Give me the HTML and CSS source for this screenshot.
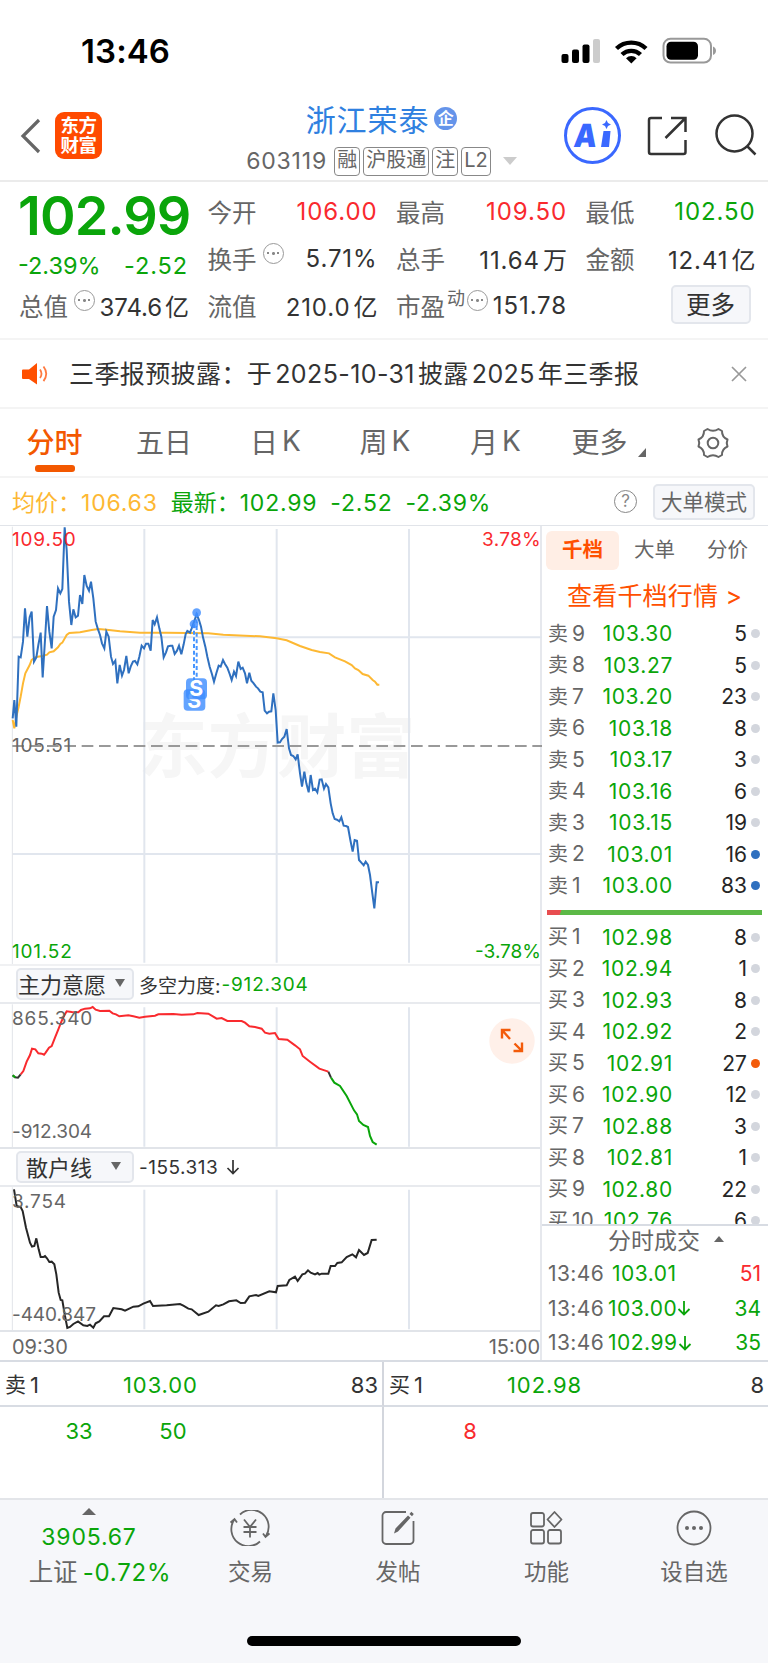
FILE: index.html
```html
<!DOCTYPE html>
<html lang="zh-CN">
<head>
<meta charset="utf-8">
<title>浙江荣泰 603119</title>
<link rel="stylesheet" href="styles.css">
</head>
<body>
<div class="phone">
  <div class="status">
    <span class="clock">13:46</span>
    <svg class="status-icons" width="160" height="30" viewBox="560 36 160 30">
      <rect x="561.500" y="54" width="7" height="9" rx="2"/><rect x="572" y="49.500" width="7" height="13.500" rx="2"/><rect x="582.500" y="44.500" width="7" height="18.500" rx="2"/><rect x="593" y="39" width="7" height="24" rx="2" fill="#ccc"/>
      <g fill="none" stroke="#000" stroke-width="4.400"><path d="M616.500 48.500a21.500 21.500 0 0 1 29.500 0"/><path d="M622 54.500a13.500 13.500 0 0 1 18.500 0"/></g>
      <path d="M631.300 63.500l-5.300-5.300a7.500 7.500 0 0 1 10.600 0z"/>
      <rect x="663.500" y="38.800" width="47.500" height="23.700" rx="7" fill="none" stroke="#999" stroke-width="2"/><rect x="666.500" y="41.800" width="31.500" height="18" rx="4.500"/><path d="M713 46.500c4 1.500 4 7 0 8.500z" fill="#999"/>
    </svg>
  </div>

  <header class="header">
    <svg class="back" width="24" height="38" viewBox="0 0 24 38"><path d="M20 3L4 19l16 16" fill="none" stroke="#666" stroke-width="3.200"/></svg>
    <div class="logo"><span>东方</span><span>财富</span></div>
    <div class="title">
      <div class="name">浙江荣泰<i class="corp">企</i></div>
      <div class="code"><span class="num">603119</span><b>融</b><b>沪股通</b><b>注</b><b>L2</b><svg width="14" height="8"><path d="M0 0h14l-7 8z" fill="#ccc"/></svg></div>
    </div>
    <div class="ai"><span>A</span><svg width="12" height="28" viewBox="0 0 12 28"><path d="M3.500 11h7L9 27H1z" fill="#3a68ff"/><path d="M6.500 0l1.500 3 3 1.500-3 1.500-1.500 3L5 6 2 4.500 5 3z" fill="#3a68ff"/></svg></div>
    <svg class="share" width="40" height="40" viewBox="0 0 40 40" fill="none" stroke="#333" stroke-width="2.500"><path d="M15 2H4a2 2 0 0 0-2 2v32a2 2 0 0 0 2 2h32.500a2 2 0 0 0 2-2V24M24 2h14.500v14M38 2.500L18.500 22"/></svg>
    <svg class="search" width="42" height="42" viewBox="0 0 42 42" fill="none" stroke="#333" stroke-width="2.500"><circle cx="19.500" cy="19.500" r="18"/><path d="M32 32l8.500 8.500"/></svg>
  </header>

  <section class="quote">
    <div class="price-block"><strong class="last">102.99</strong><div class="change"><span>-2.39%</span><span class="delta">-2.52</span></div></div>
    <div class="pair"><label>今开</label><span class="red">106.00</span></div>
    <div class="pair"><label>最高</label><span class="red">109.50</span></div>
    <div class="pair"><label>最低</label><span class="green">102.50</span></div>
    <div class="pair"><label>换手</label><i class="more-dot"></i><span>5.71%</span></div>
    <div class="pair"><label>总手</label><span>11.64<em>万</em></span></div>
    <div class="pair"><label>金额</label><span>12.41<em>亿</em></span></div>
    <div class="pair tight"><label>总值</label><i class="more-dot"></i><span>374.6<em>亿</em></span></div>
    <div class="pair"><label>流值</label><span>210.0<em>亿</em></span></div>
    <div class="pair"><label>市盈</label><sup>动</sup><i class="more-dot"></i><span>151.78</span></div>
    <button class="btn more-btn">更多</button>
  </section>

  <section class="notice">
    <svg width="28" height="24" viewBox="0 0 28 24"><path d="M1 7.500h6L15 1v21.500L7 17H1a1 1 0 0 1-1-1V8.500a1 1 0 0 1 1-1z" fill="#ff5000"/><path d="M18 7.500q3 4.300 0 8.600M21.500 4.500q5.500 7.300 0 14.600" fill="none" stroke="#ff7a40" stroke-width="1.800"/></svg>
    <p>三季报预披露：于<span>2025-10-31</span>披露<span>2025</span>年三季报</p>
    <svg class="close" width="16" height="16" viewBox="0 0 16 16"><path d="M1 1l14 14M15 1L1 15" stroke="#999" stroke-width="1.700"/></svg>
  </section>

  <nav class="tabs">
    <a class="on">分时</a><a>五日</a><a>日<span>K</span></a><a>周<span>K</span></a><a>月<span>K</span></a>
    <a class="tab-more">更多<svg width="8" height="9"><path d="M8 0v9H0z" fill="#666"/></svg></a>
    <svg class="gear" width="34" height="34" viewBox="-17 -17 34 34" fill="none" stroke="#666" stroke-width="2"><path d="M-5.500-14Q0-10.500 5.500-14L9-12Q8.800-6 14.500-3.500Q13 0 14.500 3.500Q8.800 6 9 12L5.500 14Q0 10.500-5.500 14L-9 12Q-8.800 6-14.500 3.500Q-13 0-14.500-3.500Q-8.800-6-9-12Z" stroke-linejoin="round"/><circle r="5.300"/></svg>
  </nav>

  <section class="summary">
    <span class="avg">均价：<b>106.63</b></span><span class="new">最新：<b>102.99</b><b>-2.52</b><b>-2.39%</b></span>
    <i class="help">?</i><button class="btn mode">大单模式</button>
  </section>

  <main class="main">
    <div class="left">
      <div class="chart price-chart">
        <svg width="542" height="439" viewBox="0 18 1626 1317" fill="none" stroke-width="6">
          <text x="415" y="757" class="wm">东方财富</text>
          <path d="M37 352H1626M37 1002H1626M433 27V1328M830 27V1328M1227 27V1328" stroke="#e1e6ee" stroke-width="6"/>
          <path d="M37 20V1332" stroke="#e1e4e9" stroke-width="3"/>
          <path d="M37 678H1626" stroke="#999" stroke-width="6" stroke-dasharray="35 17"/>
          <path stroke="#fdb833" d="M38 600L43 625 49 590 56 560 62 530 69 490 76 460 89 435 95 420 108 411 128 408 141 404 148 397 161 394 174 382 181 372 187 368 200 345 208 339 240 337 275 330 295 327 320 329 360 334 420 338 500 338 625 340 670 344 780 349 830 355 860 361 900 378 935 390 960 396 987 400 1005 412 1035 424 1055 435 1065 445 1075 450 1088 462 1105 467 1118 480 1125 485 1132 494H1138"/>
          <path stroke="#2f70bf" d="M38 595L43 540 49 620 56 410 62 412 69 365 75 265 82 350 89 292 95 275 102 425 109 412 115 375 122 338 128 472 135 360 141 258 148 335 155 385 161 290 168 270 174 205 181 220 187 207 194 22 200 90 207 245 214 315 220 268 227 292 234 287 240 225 247 252 253 165 260 198 267 212 273 185 280 235 287 305 293 325 300 345 306 370 313 385 319 335 326 350 333 410 339 432 346 422 352 490 359 435 366 467 372 450 379 408 386 460 392 440 399 425 405 423 412 433 418 410 425 377 432 385 438 371 445 371 452 392 458 300 464 313 471 292 478 325 484 350 491 412 498 397 504 379 511 377 517 377 524 402 531 392 537 377 544 403 551 373 557 342 562 333 570 338 575 325 590 283 597 300 603 320 609 352 616 380 622 410 629 440 636 463 642 485 649 460 656 437 662 440 669 420 675 432 682 443 689 462 695 480 702 455 708 468 715 425 722 447 728 443 735 460 741 490 748 458 754 482 761 490 768 500 774 505 781 515 788 517 794 572 801 580 807 575 814 574 820 520 827 570 833 668 840 667 846 657 853 650 860 627 867 685 873 705 880 708 887 718 893 703 900 760 906 800 913 755 919 790 926 817 932 765 939 810 945 806 952 817 959 779 965 778 972 806 978 792 985 802 992 850 998 880 1004 897 1011 899 1018 904 1024 892 1031 917 1038 918 1044 921 1051 960 1058 995 1064 960 1071 962 1077 1020 1084 1028 1091 1036 1097 1025 1104 1035 1110 1065 1117 1120 1123 1165 1130 1087H1137"/>
          <path d="M582 312V508M590 278V475" stroke="#4795ff" stroke-dasharray="12 8"/>
          <g fill="#3c8cff" fill-opacity=".8"><circle cx="590" cy="278" r="13"/><circle cx="582" cy="312" r="13"/><rect x="551" y="508" width="65" height="64" rx="12"/><text x="583" y="563" class="mark">S</text><rect x="558" y="475" width="63" height="63" rx="12"/><text x="589" y="529" class="mark">S</text></g>
        </svg>
        <span class="lbl tl wide red">109.50</span><span class="lbl tr red">3.78%</span><span class="lbl mid wide">105.51</span><span class="lbl bl wide green">101.52</span><span class="lbl br green">-3.78%</span>
      </div>
      <div class="bar"><button class="btn pick">主力意愿<i></i></button><span>多空力度:<b>-912.304</b></span></div>
      <div class="chart sub-chart">
        <svg width="542" height="145" viewBox="0 129 1626 435" fill="none" stroke-width="6">
          <path d="M433 139V557M830 139V557M1227 139V557" stroke="#e1e6ee"/><path d="M37 130V562" stroke="#e1e4e9" stroke-width="3"/>
          <path stroke="#333" d="M38 343L45 349 54 350 62 340M985 332L993 350"/>
          <path stroke="#0aa50a" d="M38 343L46 349M993 350L1003 365 1020 375 1040 405 1062 448 1071 460 1077 480 1090 492 1104 498 1110 525 1118 543 1130 551"/>
          <path stroke="#f92a2e" d="M62 340L70 330 80 302 90 282 96 263 106 265 115 277 125 278 132 281 137 275 147 260 155 255 165 230 175 205 185 180 192 165 200 151 215 153 235 154 243 147 255 143 270 142 278 138 287 146 300 150 328 149 338 157 348 160 358 166 385 163 400 166 418 170 435 167 465 164 475 160 520 159 545 161 580 160 592 156 625 158 640 167 650 173 665 171 682 180 725 180 735 185 748 196 765 198 785 203 795 215 808 218 825 216 836 234 862 236 885 253 900 265 908 285 930 302 958 323 985 332"/>
        </svg>
        <span class="lbl tl wide">865.340</span><span class="lbl bl">-912.304</span>
        <svg class="expand" width="46" height="46" viewBox="-23 -23 46 46"><circle r="22.700" fill="#fff0e9"/><path d="M-1.500-11H-10v8.500M-10-11L-2-2M1.500 10H10V1.500M10 10L2.500 2.500" fill="none" stroke="#f35b0a" stroke-width="2.400"/></svg>
      </div>
      <div class="bar"><button class="btn pick second">散户线<i></i></button><span class="retail">-155.313 <svg width="14" height="16" viewBox="0 0 14 16"><path d="M7 1v13M1.500 9L7 14.500 12.500 9" fill="none" stroke="#333" stroke-width="1.700"/></svg></span></div>
      <div class="chart sub-chart">
        <svg width="542" height="145" viewBox="0 108 1626 435" fill="none" stroke-width="6">
          <path d="M433 116V535M830 116V535M1227 116V535" stroke="#e1e6ee"/><path d="M37 109V541" stroke="#e1e4e9" stroke-width="3"/>
          <path stroke="#262626" d="M42 115L50 165 62 168 68 180 78 230 90 275 96 287 103 285 109 262 116 295 122 318 130 318 135 315 141 322 148 333 155 332 163 340 169 370 176 425 182 447 187 448 195 495 202 531 210 528 220 519 234 511 250 523 262 525 270 521 280 530 287 517 298 511 312 496 327 496 340 471 365 475 375 479 400 467 415 466 430 458 450 450 459 465 500 463 540 459 550 464 565 473 575 475 596 492 625 482 648 463 656 465 670 460 687 451 709 448 722 456 735 455 748 436 768 432 775 435 808 421 828 424 833 405 860 403 868 387 885 377 893 390 907 370 915 368 924 358 932 365 945 370 953 366 958 371 965 368 985 368 992 345 1005 345 1012 336 1025 334 1040 318 1057 310 1068 319 1077 297 1092 312 1103 306 1115 267 1130 266"/>
        </svg>
        <span class="lbl tl wide">3.754</span><span class="lbl bl">-440.847</span>
      </div>
      <div class="axis"><span>09:30</span><span>15:00</span></div>
    </div>

    <aside class="right">
      <div class="seg"><a class="on">千档</a><a>大单</a><a>分价</a></div>
      <a class="link">查看千档行情 &gt;</a>
      <div class="book sells">
        <div><label>卖<b>9</b></label><span>103.30</span><em>5</em><i></i></div>
        <div><label>卖<b>8</b></label><span>103.27</span><em>5</em><i></i></div>
        <div><label>卖<b>7</b></label><span>103.20</span><em>23</em><i></i></div>
        <div><label>卖<b>6</b></label><span>103.18</span><em>8</em><i></i></div>
        <div><label>卖<b>5</b></label><span>103.17</span><em>3</em><i></i></div>
        <div><label>卖<b>4</b></label><span>103.16</span><em>6</em><i></i></div>
        <div><label>卖<b>3</b></label><span>103.15</span><em>19</em><i></i></div>
        <div><label>卖<b>2</b></label><span>103.01</span><em>16</em><i class="blue"></i></div>
        <div><label>卖<b>1</b></label><span>103.00</span><em>83</em><i class="blue"></i></div>
      </div>
      <div class="ratio"></div>
      <div class="book buys">
        <div><label>买<b>1</b></label><span>102.98</span><em>8</em><i></i></div>
        <div><label>买<b>2</b></label><span>102.94</span><em>1</em><i></i></div>
        <div><label>买<b>3</b></label><span>102.93</span><em>8</em><i></i></div>
        <div><label>买<b>4</b></label><span>102.92</span><em>2</em><i></i></div>
        <div><label>买<b>5</b></label><span>102.91</span><em>27</em><i class="orange"></i></div>
        <div><label>买<b>6</b></label><span>102.90</span><em>12</em><i></i></div>
        <div><label>买<b>7</b></label><span>102.88</span><em>3</em><i></i></div>
        <div><label>买<b>8</b></label><span>102.81</span><em>1</em><i></i></div>
        <div><label>买<b>9</b></label><span>102.80</span><em>22</em><i></i></div>
        <div><label>买<b>10</b></label><span>102.76</span><em>6</em><i></i></div>
      </div>
      <div class="deals-title">分时成交<svg width="10" height="6"><path d="M0 6h10L5 0z" fill="#666"/></svg></div>
      <div class="deals">
        <div><time>13:46</time><span class="up">103.01</span><em class="red">51</em></div>
        <div><time>13:46</time><span>103.00<svg width="14" height="16" viewBox="0 0 14 16"><path d="M7 1v13M1.500 9L7 14.500 12.500 9"/></svg></span><em>34</em></div>
        <div><time>13:46</time><span>102.99<svg width="14" height="16" viewBox="0 0 14 16"><path d="M7 1v13M1.500 9L7 14.500 12.500 9"/></svg></span><em>35</em></div>
      </div>
    </aside>
  </main>

  <section class="queue">
    <div class="q-head"><label>卖<b>1</b></label><span>103.00</span><em>83</em></div>
    <div class="q-head"><label>买<b>1</b></label><span>102.98</span><em>8</em></div>
    <div class="q-body"><span>33</span><span>50</span></div>
    <div class="q-body buy-side red"><span>8</span></div>
  </section>

  <footer class="foot">
    <div class="index"><svg width="14" height="7"><path d="M0 7h14L7 0z" fill="#666"/></svg><span>3905.67</span><span class="pct"><label>上证</label>-0.72%</span></div>
    <div class="item"><svg width="40" height="36" viewBox="-20 -18 40 36"><path d="M-10-13.500A17 17 0 0 1 16 8M10 13.500A17 17 0 0 1-16-8M-19.500-5.500L-15.500-9 -13-5.500M19.500 5.500L15.500 9 13 5.500M-6-8.500L0-1 6-8.500M0-1V9.500M-6.500-1H6.500M-6.500 4H6.500"/></svg>交易</div>
    <div class="item"><svg width="40" height="36" viewBox="-20 -18 40 36"><path d="M8-16H-12a3.500 3.500 0 0 0-3.500 3.500V12.500A3.500 3.500 0 0 0-12 16H12a3.500 3.500 0 0 0 3.500-3.500V-7"/><path d="M-4 5.500l1.500-5L10-12.500l2.500 2.300L0 3.500zM11.500-14l1.800-2.200 2.500 2.200-1.800 2.200z" fill="#666" stroke="none"/></svg>发帖</div>
    <div class="item"><svg width="40" height="36" viewBox="-20 -18 40 36"><rect x="-15" y="-15" width="13" height="13.500" rx="2"/><rect x="-15" y="2" width="13" height="13.500" rx="2"/><rect x="2" y="2" width="13" height="13.500" rx="2"/><path d="M8.500-16L15.500-8.500 8.500-1 1.500-8.500z" stroke-linejoin="round"/></svg>功能</div>
    <div class="item"><svg width="40" height="36" viewBox="-20 -18 40 36"><circle r="16.500"/><g fill="#666" stroke="none"><circle cx="-7" r="2"/><circle r="2"/><circle cx="7" r="2"/></g></svg>设自选</div>
    <div class="home"></div>
  </footer>
</div>
</body>
</html>
```
FILE: styles.css
```css
* { box-sizing: border-box; }
body { margin: 0; background: #fff; font-family: Inter, "Noto Sans CJK SC", sans-serif; color: #333; }
i, em, b { font-style: normal; font-weight: 400; }
svg { display: block; flex: none; }
.phone { width: 768px; height: 1663px; overflow: hidden; display: flex; flex-direction: column; white-space: nowrap; }
.phone > * { flex: none; }
.red { color: #f92a2e !important; }
.green { color: #0aa50a !important; }
.btn { font: inherit; color: #333; background: #f6f7fa; border: 2px solid #e3e6ec; border-radius: 5px; padding: 0 0 2px; display: flex; align-items: center; justify-content: center; }

.status { height: 92px; padding: 36px 48px 0 81px; display: flex; justify-content: space-between; }
.clock { font-size: 33px; font-weight: 600; line-height: 31px; color: #000; letter-spacing: .1px; }

.header { height: 90px; border-bottom: 2px solid #ebebeb; display: flex; padding-left: 19px; }
.back { margin-top: 25px; }
.logo { width: 47px; height: 47px; margin: 20px 0 0 12px; border-radius: 9px; background: #ff4a00; color: #fff; display: flex; flex-direction: column; align-items: center; justify-content: center; padding-bottom: 2px; font-size: 18.500px; font-weight: 700; line-height: 20px; letter-spacing: -.5px; }
.title { width: 365px; margin-left: 97px; display: flex; flex-direction: column; align-items: center; }
.name { display: flex; align-items: center; height: 40px; margin-top: 6px; font-size: 30px; letter-spacing: .9px; color: #2f80e0; }
.corp { width: 23px; height: 23px; margin-left: 5px; border-radius: 50%; background: #6594ea; color: #fff; font-size: 16px; font-weight: 700; line-height: 22px; text-align: center; letter-spacing: 0; }
.code { display: flex; align-items: center; height: 30px; margin-top: 8px; color: #666; font-size: 22px; }
.code .num { font-size: 23px; width: 84px; margin-right: 4px; letter-spacing: .8px; }
.code b { height: 29px; border: 1.500px solid #888; border-radius: 4px; padding: 0 2px; margin-right: 3px; line-height: 24px; font-size: 20px; }
.code svg { margin-left: 9px; }
.ai { width: 57px; height: 57px; margin: 15px 0 0 0; border: 3px solid #3a68ff; border-radius: 50%; display: flex; align-items: center; justify-content: center; gap: 2px; color: #3a68ff; }
.ai span { font-size: 32px; font-weight: 900; line-height: 40px; transform: skewX(-6deg) scaleX(.9); }
.ai svg { margin-top: -4px; }
.share { margin: 24px 0 0 26px; }
.search { margin: 22px 0 0 28px; }

.quote { height: 158px; border-bottom: 2px solid #f4f4f4; padding: 6px 13px 0 19px; display: grid; grid-template-columns: 169px 169px 170px 169px; column-gap: 19.500px; grid-template-rows: 48px 47px 47px; }
.price-block { grid-row: span 2; color: #0aa50a; }
.last { display: block; font-size: 54px; font-weight: 600; line-height: 56px; height: 60px; letter-spacing: -.9px; margin-left: -1px; }
.change { display: flex; justify-content: space-between; font-size: 23.500px; line-height: 36px; margin-left: -1px; }
.delta { letter-spacing: .9px; }
.pair { display: flex; align-items: center; font-size: 24px; padding-bottom: 2px; letter-spacing: .9px; }
.pair label { font-size: 24.500px; color: #666; letter-spacing: 0; }
.pair span { margin-left: auto; margin-right: -1px; }
.pair.tight span { letter-spacing: -.1px; }
.pair em { font-size: 24px; margin-left: 3px; letter-spacing: 0; }
.pair sup { font-size: 18px; color: #666; align-self: flex-start; line-height: 22px; margin: 5px 0 0 2px; letter-spacing: 0; }
.more-dot { width: 21px; height: 21px; margin: -10px 0 0 6px; border: 1.500px solid #999; border-radius: 50%; background: radial-gradient(circle, #888 1.300px, transparent 1.600px) center / 5px 5px no-repeat, radial-gradient(circle at 4px 9px, #888 1.200px, transparent 1.500px), radial-gradient(circle at 14px 9px, #888 1.200px, transparent 1.500px); flex: none; }
sup + .more-dot { margin-left: 2px; }
.more-btn { width: 80px; height: 39px; justify-self: end; margin: 2px 4px 0 0; font-size: 24.500px; }

.notice { height: 69px; border-bottom: 2px solid #f4f4f4; display: flex; align-items: center; padding: 0 21px 0 22px; font-size: 25px; }
.notice p { margin: 0 0 3px 19px; letter-spacing: .4px; }
.notice span { margin: 0 3px; }
.close { margin-left: auto; }

.tabs { height: 69px; border-bottom: 2px solid #f4f4f4; display: grid; grid-template-columns: 109px 110px 113px 106px 115px 111px 1fr; align-items: center; color: #666; font-size: 28px; }
.tabs a { display: flex; justify-content: center; align-items: center; height: 68px; position: relative; padding-bottom: 5px; }
.tabs a span { margin-left: 4px; }
.tabs .on { color: #f35800; font-weight: 500; }
.tabs .on::after { content: ""; position: absolute; left: 35px; bottom: 5px; width: 40px; height: 7px; border-radius: 3px; background: #f35800; }
.tab-more svg { margin: 24px 0 0 10px; }
.gear { justify-self: center; margin-right: 6px; }

.summary { height: 48px; border-bottom: 1px solid #e1e4e9; display: flex; align-items: center; padding: 0 13px 0 12px; font-size: 23px; color: #0aa50a; }
.avg, .new { margin-bottom: 2px; }
.avg { color: #fdb833; }
.summary b { font-size: 23px; letter-spacing: .8px; margin-right: 13px; }
.help { width: 23px; height: 23px; margin-left: auto; border: 1.500px solid #888; border-radius: 50%; color: #888; font-size: 17px; line-height: 20px; text-align: center; }
.mode { width: 102px; height: 36px; margin-left: 16px; font-size: 21.500px; color: #666; }

.main { height: 834px; display: grid; grid-template-columns: 542px 226px; }
.left { border-right: 2px solid #e6e8ed; }
.chart { position: relative; }
.price-chart { height: 440px; border-bottom: 2px solid #f0f1f3; }
.wm { font: 700 208px "Noto Sans CJK SC"; fill: #f6f6f6; }
.mark { font: 700 64px Inter; fill: #fff; fill-opacity: 1; text-anchor: middle; }
.lbl { position: absolute; font-size: 19px; line-height: 22px; color: #666; }
.wide { letter-spacing: .8px; }
.tl { left: 12px; top: 3px; }
.tr { right: -1px; top: 3px; letter-spacing: .3px; }
.mid { left: 12px; top: 209px; }
.bl { left: 12px; bottom: 1px; }
.br { right: -1px; bottom: 1px; }
.sub-chart .tl { top: 4px; }
.sub-chart .bl { bottom: 4px; letter-spacing: -.1px; }
.bar { height: 38px; border-bottom: 2px solid #e8eaee; padding: 0 0 0 16px; display: flex; align-items: center; gap: 5px; font-size: 19px; }
.bar b { color: #0aa50a; letter-spacing: .8px; }
.bar span { display: flex; align-items: center; gap: 8px; }
.bar span b { margin-left: -7px; }
.bar .retail { letter-spacing: .5px; }
.pick { width: 118px; height: 32px; font-size: 22px; gap: 9px; justify-content: flex-start; }
.pick i { border: 5px solid transparent; border-top: 8px solid #666; border-bottom: 0; }
.second { gap: 19px; padding-left: 8px; }
.sub-chart { height: 145px; border-bottom: 2px solid #e1e4e9; }
.expand { position: absolute; left: 489px; top: 14px; }
.axis { height: 28px; padding-left: 12px; display: flex; justify-content: space-between; font-size: 20px; line-height: 31px; color: #666; }

.seg { height: 49px; display: flex; align-items: flex-start; padding: 5px 0 0 4px; font-size: 20.500px; color: #666; }
.seg a { width: 73px; height: 39px; line-height: 38px; text-align: center; }
.seg .on { margin-right: -1px; border-radius: 6px; background: #ffeee5; color: #ff5000; font-weight: 700; }
.link { display: block; height: 43px; line-height: 42px; padding-left: 25px; font-size: 25px; letter-spacing: .2px; color: #ff5000; }
.book div { height: 31.500px; display: grid; grid-template-columns: 50px 76px 1fr 9px; align-items: center; padding: 0 8px 0 6px; font-size: 21px; }
.book label { font-size: 20px; color: #666; display: flex; align-items: center; line-height: 28px; }
.book label b { font-size: 21px; margin-left: 4px; }
.book span { color: #0aa50a; text-align: right; margin-right: 1px; letter-spacing: .7px; }
.book em { color: #262626; text-align: right; margin-right: 4px; }
.book i { width: 9px; height: 9px; border-radius: 50%; background: #d3d6dd; }
.book .blue { background: #2f70bf; }
.book .orange { background: #f35b0a; }
.ratio { height: 5px; margin: 8px 6px 7px 5px; background: linear-gradient(110deg, #e84d50 13px, #5cb947 14px); }
.buys { height: 302px; overflow: hidden; }
.deals-title { height: 34px; border-top: 2px solid #d8dce3; display: flex; align-items: center; padding: 0 0 5px 66px; font-size: 23px; gap: 14px; color: #666; }
.deals div { height: 34.500px; display: flex; align-items: center; padding: 0 7px 2px 6px; font-size: 21px; color: #0aa50a; }
.deals time { width: 60px; color: #666; font-size: 21px; letter-spacing: .4px; }
.deals span { display: flex; align-items: center; letter-spacing: .5px; }
.deals .up { padding-left: 4px; }
.deals svg { fill: none; stroke: #0aa50a; stroke-width: 1.800; }
.deals em { margin-left: auto; }

.queue { height: 140px; border-top: 2px solid #d8dce3; display: grid; grid-template-columns: 384px 384px; grid-template-rows: 45px 1fr; border-bottom: 2px solid #e3e5e9; font-size: 22px; }
.queue > :nth-child(odd) { border-right: 2px solid #d3d6dd; }
.q-head { border-bottom: 2px solid #d8dce3; display: flex; align-items: center; padding: 2px 4px 0 5px; }
.q-head label { width: 118px; display: flex; align-items: center; font-size: 21px; line-height: 28px; }
.q-head b { margin-left: 4px; font-size: 22px; }
.q-head span { color: #0aa50a; letter-spacing: .9px; }
.q-head em { margin-left: auto; }
.q-body { color: #0aa50a; display: grid; grid-template-columns: 94px 94px; padding: 9px 0 0 32px; line-height: 30px; text-align: center; align-content: start; }
.buy-side { padding-left: 39px; }

.foot { height: 164px; background: #f6f7fa; display: grid; grid-template-columns: 178px 145px 150px 147px 148px; grid-template-rows: 90px 1fr; justify-items: center; color: #666; }
.index { width: 178px; display: flex; flex-direction: column; align-items: center; color: #0aa50a; font-size: 23px; padding: 8px 0 0 0; letter-spacing: .8px; }
.index span { line-height: 35px; display: flex; align-items: center; }
.index .pct { margin-left: 22px; font-size: 24px; }
.index svg { margin-bottom: 5px; }
.index label { color: #666; font-size: 24.500px; margin-right: 5px; letter-spacing: 0; }
.item { display: flex; flex-direction: column; align-items: center; padding-top: 10px; font-size: 22.500px; line-height: 48px; }
.item svg { fill: none; stroke: #666; stroke-width: 1.800; margin-bottom: 2px; }
.home { grid-column: 1 / -1; width: 274px; height: 10px; margin-top: 46px; border-radius: 5px; background: #000; }
```
